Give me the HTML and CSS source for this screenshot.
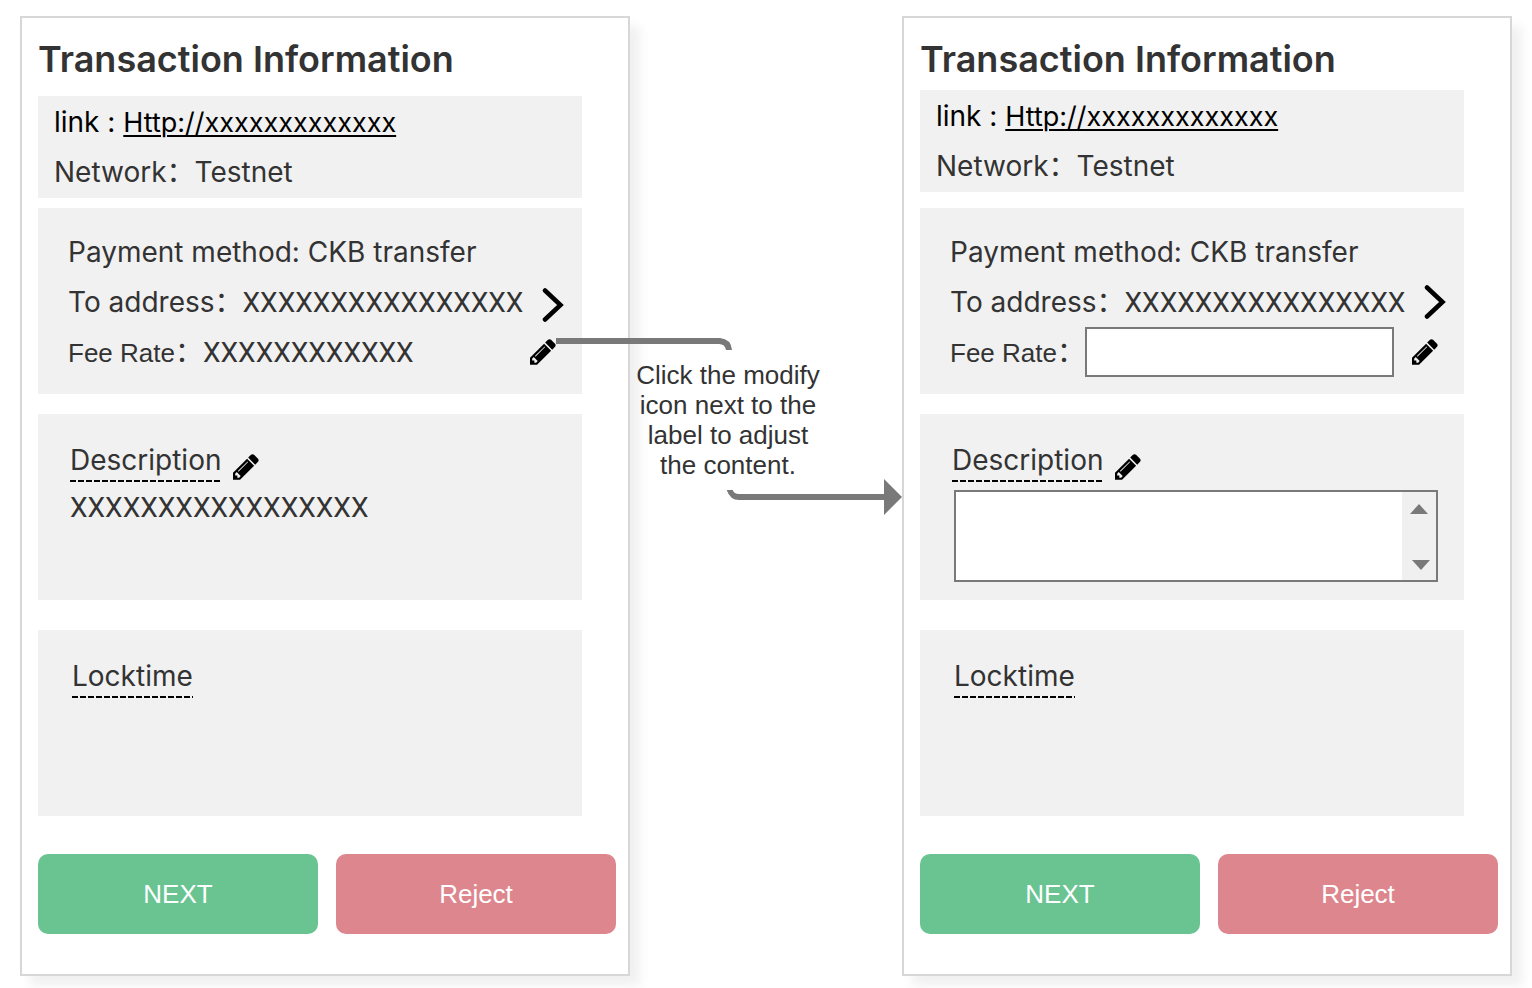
FILE: index.html
```html
<!DOCTYPE html>
<html lang="en">
<head>
<meta charset="utf-8">
<title>Transaction Information</title>
<link rel="stylesheet" href="styles.css">
</head>
<body>
<svg class="defs" aria-hidden="true">
  <symbol id="pencil" viewBox="0 140 1536 1536"><path d="M363 1536l91 -91l-235 -235l-91 91v107h128v128h107zM886 608q0 -22 -22 -22q-10 0 -17 7l-542 542q-7 7 -7 17q0 22 22 22q10 0 17 -7l542 -542q7 -7 7 -17zM832 416l416 416l-832 832h-416v-416zM1515 512q0 53 -37 90l-166 166l-416 -416l166 -165q36 -38 90 -38q53 0 91 38l235 234q37 39 37 91z"/></symbol>
  <symbol id="chevron" viewBox="0 0 22 34"><path d="M3 2.500L18.500 17L3 31.500" fill="none" stroke="#000" stroke-width="4.500" stroke-linecap="round"/></symbol>
</svg>
<main class="flow">
  <section class="panel panel-view">
    <h1 class="title">Transaction Information</h1>
    <div class="card source">
      <p class="row link-row">link : <a class="link" href="#">Http://xxxxxxxxxxxxx</a></p>
      <p class="row">Network：Testnet</p>
    </div>
    <div class="card payment">
      <p class="row">Payment method: CKB transfer</p>
      <div class="row spread"><span>To address：<span class="value">XXXXXXXXXXXXXXXX</span></span><button class="icon-btn more" aria-label="Show address"><svg class="chevron"><use href="#chevron"/></svg></button></div>
      <div class="row spread"><span><span class="fee">Fee Rate</span>：<span class="value">XXXXXXXXXXXX</span></span><button class="icon-btn fee-edit" aria-label="Edit fee rate"><svg class="pencil"><use href="#pencil"/></svg></button></div>
    </div>
    <div class="card description">
      <div class="heading"><span class="dashed">Description</span><button class="icon-btn" aria-label="Edit description"><svg class="pencil"><use href="#pencil"/></svg></button></div>
      <p class="value">XXXXXXXXXXXXXXXXX</p>
    </div>
    <div class="card locktime"><div class="heading"><span class="dashed">Locktime</span></div></div>
    <div class="actions"><button class="action next">NEXT</button><button class="action reject">Reject</button></div>
  </section>

  <aside class="guide">
    <svg class="connector" viewBox="0 0 346 190" aria-hidden="true">
      <path d="M0 8H164Q175 9 176 20H170Q169 14 163 14H0Z"/>
      <path d="M170.700 160H176.700Q178 164 183 164H330V170H183Q174 170 170.700 160Z"/>
      <path d="M328 149L346 167L328 185Z"/>
    </svg>
    <p class="note">Click the modify icon next to the label to adjust the content.</p>
  </aside>

  <section class="panel panel-edit">
    <h2 class="title">Transaction Information</h2>
    <div class="card source">
      <p class="row link-row">link : <a class="link" href="#">Http://xxxxxxxxxxxxx</a></p>
      <p class="row">Network：Testnet</p>
    </div>
    <div class="card payment">
      <p class="row">Payment method: CKB transfer</p>
      <div class="row spread"><span>To address：<span class="value">XXXXXXXXXXXXXXXX</span></span><button class="icon-btn more" aria-label="Show address"><svg class="chevron"><use href="#chevron"/></svg></button></div>
      <div class="row spread"><label for="fee"><span class="fee">Fee Rate</span>：</label><input class="fee-input" id="fee" type="text"><button class="icon-btn fee-edit" aria-label="Edit fee rate"><svg class="pencil"><use href="#pencil"/></svg></button></div>
    </div>
    <div class="card description">
      <div class="heading"><label class="dashed" for="desc">Description</label><button class="icon-btn" aria-label="Edit description"><svg class="pencil"><use href="#pencil"/></svg></button></div>
      <div class="editor">
        <textarea class="desc-input" id="desc"></textarea>
        <div class="scrollbar" aria-hidden="true">
          <svg class="arrow" viewBox="0 0 18 10"><path d="M0 10L9 0L18 10Z"/></svg>
          <svg class="arrow arrow-down" viewBox="0 0 18 10"><path d="M0 0L9 10L18 0Z"/></svg>
        </div>
      </div>
    </div>
    <div class="card locktime"><div class="heading"><span class="dashed">Locktime</span></div></div>
    <div class="actions"><button class="action next">NEXT</button><button class="action reject">Reject</button></div>
  </section>
</main>
</body>
</html>
```
FILE: styles.css
```css
* { box-sizing: border-box; }
body {
  margin: 0;
  padding: 16px 20px 12px;
  background: #fff;
  color: #333;
  font: 28px/50px Inter, "Noto Sans CJK SC", sans-serif;
}
h1, h2, p { margin: 0; }
button { border: 0; padding: 0; cursor: pointer; }
.defs { display: none; }
.flow { display: grid; grid-template-columns: 610fr 272fr 610fr; }
.panel {
  min-width: 0;
  padding: 16px 12px 40px 16px;
  border: 2px solid #d7d7d7;
  background: #fff;
  box-shadow: 10px 10px 10px rgba(0, 0, 0, 0.06);
}
.title { font-size: 36px; line-height: 50px; font-weight: 600; white-space: nowrap; }
.card { margin-right: 34px; background: #f1f1f1; }
.source { margin-top: 12px; padding: 1px 16px; }
.panel-edit .source { margin-top: 6px; }
.row { height: 50px; white-space: nowrap; }
.spread { display: flex; align-items: center; justify-content: space-between; }
.link-row { color: #000; }
.link { color: #000; font-size: 27px; text-decoration-thickness: 2px; text-underline-offset: 3px; }
.payment { margin-top: 10px; padding: 19px 16px 17px 30px; }
.panel-edit .payment { margin-top: 16px; }
.fee { font-family: "Liberation Sans", sans-serif; font-size: 26px; }
.value { font-family: Roboto, sans-serif; }
.icon-btn { display: flex; flex: none; background: none; }
.chevron { width: 22px; height: 34px; }
.more { margin-right: 2px; }
.panel-view .more { padding-top: 6px; }
.pencil { width: 26px; height: 26px; }
.fee-edit { margin-right: 10px; }
.fee-input {
  flex: 1;
  min-width: 0;
  height: 50px;
  margin-right: 18px;
  border: 2px solid #797979;
  background: #fff;
  font: inherit;
}
.description { min-height: 186px; margin-top: 20px; padding: 26px 26px 18px 32px; }
.heading { display: flex; gap: 12px; align-items: flex-end; }
.dashed {
  height: 42px;
  line-height: 40px;
  background: repeating-linear-gradient(90deg, #000 0 6px, transparent 6px 8px) left bottom / 100% 2px no-repeat;
}
.heading .icon-btn { margin-bottom: 2px; }
.description .value { line-height: 52px; }
.editor { position: relative; margin: 8px 0 0 2px; }
.desc-input {
  display: block;
  width: 100%;
  height: 92px;
  padding: 4px 40px 4px 8px;
  border: 2px solid #797979;
  background: #fff;
  font: inherit;
  resize: none;
}
.scrollbar {
  position: absolute;
  top: 2px;
  right: 2px;
  bottom: 2px;
  display: flex;
  flex-direction: column;
  justify-content: space-between;
  width: 34px;
  padding: 12px 8px 10px;
  background: #f0f0f0;
}
.arrow { width: 18px; height: 10px; fill: #797979; }
.arrow-down { margin-left: 2px; }
.locktime { min-height: 186px; margin-top: 30px; padding: 26px 34px; }
.actions { display: grid; grid-template-columns: 1fr 1fr; gap: 18px; margin-top: 38px; }
.action {
  height: 80px;
  border-radius: 10px;
  color: #fff;
  font: 26px/30px "Liberation Sans", sans-serif;
}
.next { background: #69c492; }
.reject { background: #dd868d; }
.guide { position: relative; padding: 344px 76px 0 0; }
.note {
  width: 196px;
  font: 26px/30px "Liberation Sans", sans-serif;
  text-align: center;
}
.connector { position: absolute; top: 314px; left: -74px; width: 346px; height: 190px; fill: #797979; }
```
